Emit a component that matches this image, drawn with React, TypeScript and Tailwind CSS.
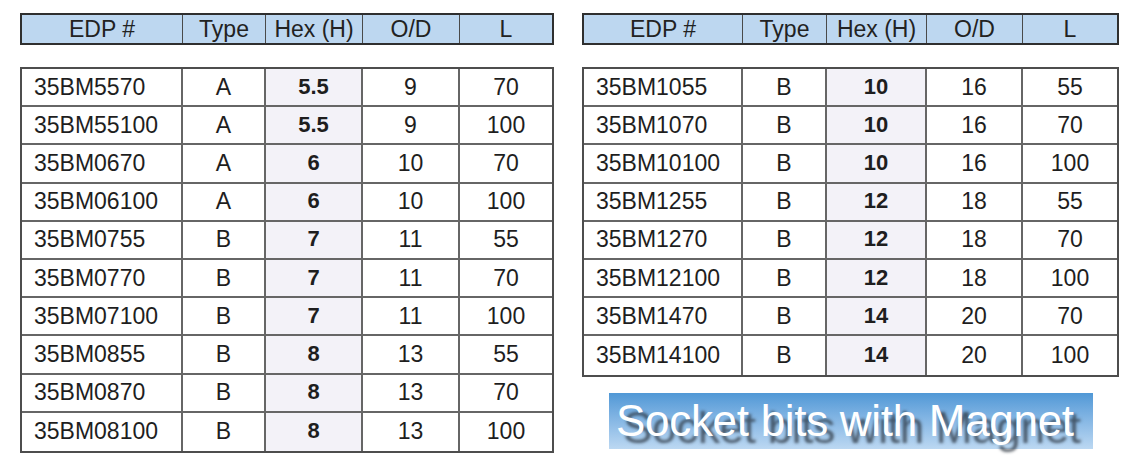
import React from 'react'

type Row = [string, string, string, string, string]

const leftRows: Row[] = [
  ['35BM5570', 'A', '5.5', '9', '70'],
  ['35BM55100', 'A', '5.5', '9', '100'],
  ['35BM0670', 'A', '6', '10', '70'],
  ['35BM06100', 'A', '6', '10', '100'],
  ['35BM0755', 'B', '7', '11', '55'],
  ['35BM0770', 'B', '7', '11', '70'],
  ['35BM07100', 'B', '7', '11', '100'],
  ['35BM0855', 'B', '8', '13', '55'],
  ['35BM0870', 'B', '8', '13', '70'],
  ['35BM08100', 'B', '8', '13', '100'],
]

const rightRows: Row[] = [
  ['35BM1055', 'B', '10', '16', '55'],
  ['35BM1070', 'B', '10', '16', '70'],
  ['35BM10100', 'B', '10', '16', '100'],
  ['35BM1255', 'B', '12', '18', '55'],
  ['35BM1270', 'B', '12', '18', '70'],
  ['35BM12100', 'B', '12', '18', '100'],
  ['35BM1470', 'B', '14', '20', '70'],
  ['35BM14100', 'B', '14', '20', '100'],
]

const heads = ['EDP #', 'Type', 'Hex (H)', 'O/D', 'L']

function Table({ rows, cols }: { rows: Row[]; cols: string }) {
  return (
    <div>
      <div className={`grid ${cols} h-[32px] bg-[#bdd7f0] border-2 border-[#2f2f2f] text-[23px] text-[#222]`}>
        {heads.map((h, i) => (
          <div key={h} className={`flex items-center justify-center leading-none ${i < 4 ? 'border-r-[1.5px] border-[#4a4a4a]' : ''}`}>
            {h}
          </div>
        ))}
      </div>
      <div className="mt-[22px] border-2 border-[#4d4d4d] text-[23px] text-[#1e1e1e]">
        {rows.map((r, ri) => (
          <div
            key={r[0]}
            className={`grid ${cols} h-[38.2px] ${ri < rows.length - 1 ? 'border-b-2 border-[#666]' : ''}`}
          >
            {r.map((c, ci) => (
              <div
                key={ci}
                className={`flex items-center leading-none ${ci === 0 ? 'justify-start pl-[12px]' : 'justify-center'} ${ci === 2 ? 'bg-[#f3f2f8] font-bold text-[22px] pb-[1px]' : ''} ${ci < 4 ? 'border-r-2 border-[#666]' : ''}`}
              >
                {c}
              </div>
            ))}
          </div>
        ))}
      </div>
    </div>
  )
}

export default function App() {
  return (
    <div className="w-[1135px] h-[466px] bg-white overflow-hidden" style={{ fontFamily: '"Liberation Sans", Arial, sans-serif' }}>
      <div className="flex gap-[28px] pl-[20px] pt-[13px]">
        <div className="w-[534px]">
          <Table rows={leftRows} cols="grid-cols-[161px_83px_97px_97px_92px]" />
        </div>
        <div className="w-[537px]">
          <Table rows={rightRows} cols="grid-cols-[159px_84px_100px_96px_94px]" />
          <div className="mt-[16px] ml-[27px] w-[484px] h-[56px] bg-gradient-to-b from-[#5098d6] to-[#bcd8f2] flex items-center">
            <span className="pl-[7px] text-[44px] leading-none text-white whitespace-nowrap tracking-[-0.3px] [text-shadow:7px_7px_3px_rgba(45,55,65,0.75)]">
              Socket bits with Magnet
            </span>
          </div>
        </div>
      </div>
    </div>
  )
}
